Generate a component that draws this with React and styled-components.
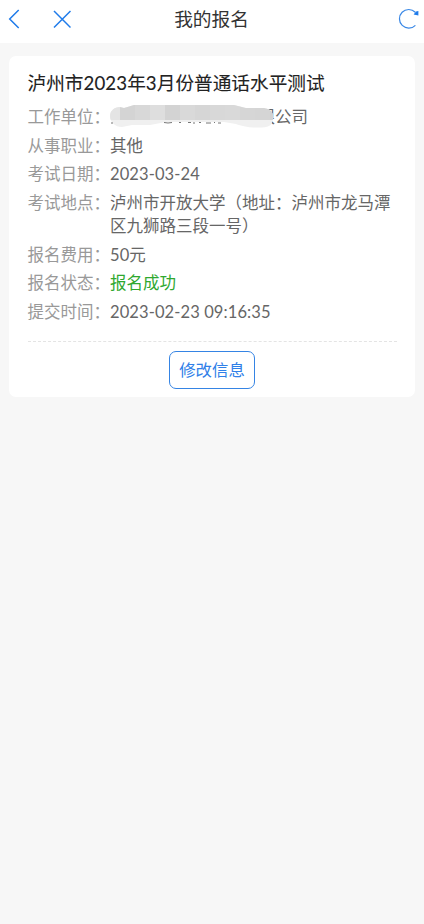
import styled, { createGlobalStyle } from 'styled-components';

const GlobalStyle = createGlobalStyle`
  * {
    box-sizing: border-box;
  }
  body {
    margin: 0;
    background-color: #f7f7f7;
    font-family: 'Noto Sans CJK SC', sans-serif;
  }
`;

const HeaderStyled = styled.header`
  display: grid;
  grid-template-columns: 1fr auto 1fr;
  align-items: center;
  height: 43px;
  padding: 0 4px 5px 6px;
  background-color: #ffffff;
`;

const HeaderTitleStyled = styled.h1`
  margin: 0 3px 2px 0;
  color: #333333;
  font-size: 18.7px;
  font-weight: 400;
  line-height: 28px;
`;

const HeaderActionsStyled = styled.div`
  display: flex;
  align-items: center;
  justify-content: ${(props) => (props.$end ? 'flex-end' : 'flex-start')};
  gap: 31px;
`;

const IconButtonStyled = styled.button`
  display: flex;
  padding: 0;
  border: 0;
  background: none;
`;

const CardStyled = styled.section`
  height: 341px;
  margin: 13px 9px 0;
  padding: 12px 18.5px 0;
  border-radius: 7px;
  background-color: #ffffff;
`;

const CardTitleStyled = styled.h2`
  margin: 0 0 9.3px;
  color: #222222;
  font-size: 18.67px;
  font-weight: 400;
  line-height: 28px;
  -webkit-text-stroke: 0.1px #222222;
`;

const InfoListStyled = styled.div`
  display: flex;
  flex-direction: column;
  gap: 5.6px;
  padding-bottom: 18.2px;
  border-bottom: 1px dashed #e4e4e4;
`;

const InfoItemStyled = styled.div`
  display: flex;
  font-size: 16.5px;
  line-height: 23px;
`;

const InfoLabelStyled = styled.div`
  flex: 0 0 82.5px;
  color: #999999;
`;

const InfoValueStyled = styled.div`
  flex: 1;
  margin-right: -6px;
  color: ${(props) => (props.$success ? '#2fa82f' : '#666666')};
`;

const NumberStyled = styled.span`
  font-family: Lato, sans-serif;
  line-height: 1;
  letter-spacing: 0.1px;
`;

const MaskedStyled = styled.span`
  position: relative;
  display: block;
  padding-left: 148.5px;
`;

const MaskStyled = styled.svg`
  position: absolute;
  top: 0;
  left: 0;
`;

const FooterStyled = styled.div`
  display: flex;
  justify-content: center;
  padding-top: 8.5px;
`;

const EditButtonStyled = styled.button`
  width: 86px;
  height: 38px;
  padding: 0 0 1px;
  border: 1.5px solid #3584e4;
  border-radius: 7px;
  background-color: #ffffff;
  color: #3080e8;
  font-family: inherit;
  font-size: 16.4px;
  line-height: 23px;
`;

export default function App() {
  return (
    <>
      <GlobalStyle />
      <HeaderStyled>
        <HeaderActionsStyled>
          <IconButtonStyled aria-label='返回'>
            <BackIcon />
          </IconButtonStyled>
          <IconButtonStyled aria-label='关闭'>
            <CloseIcon />
          </IconButtonStyled>
        </HeaderActionsStyled>
        <HeaderTitleStyled>我的报名</HeaderTitleStyled>
        <HeaderActionsStyled $end>
          <IconButtonStyled aria-label='刷新'>
            <RefreshIcon />
          </IconButtonStyled>
        </HeaderActionsStyled>
      </HeaderStyled>
      <CardStyled>
        <CardTitleStyled>
          泸州市<NumberStyled>2023</NumberStyled>年<NumberStyled>3</NumberStyled>月份普通话水平测试
        </CardTitleStyled>
        <InfoListStyled>
          <InfoItem label='工作单位：'>
            <MaskedStyled>
              限公司
              <Mask />
            </MaskedStyled>
          </InfoItem>
          <InfoItem label='从事职业：'>其他</InfoItem>
          <InfoItem label='考试日期：'>
            <NumberStyled>2023-03-24</NumberStyled>
          </InfoItem>
          <InfoItem label='考试地点：'>泸州市开放大学（地址：泸州市龙马潭区九狮路三段一号）</InfoItem>
          <InfoItem label='报名费用：'>
            <NumberStyled>50</NumberStyled>元
          </InfoItem>
          <InfoItem label='报名状态：' success>报名成功</InfoItem>
          <InfoItem label='提交时间：'>
            <NumberStyled>2023-02-23 09:16:35</NumberStyled>
          </InfoItem>
        </InfoListStyled>
        <FooterStyled>
          <EditButtonStyled>修改信息</EditButtonStyled>
        </FooterStyled>
      </CardStyled>
    </>
  );
}

const InfoItem = ({ label, success, children }) => {
  return (
    <InfoItemStyled>
      <InfoLabelStyled>{label}</InfoLabelStyled>
      <InfoValueStyled $success={success}>{children}</InfoValueStyled>
    </InfoItemStyled>
  );
};

const BackIcon = () => (
  <svg width='16' height='20' viewBox='0 0 16 20' fill='none' stroke='#1f7bea' strokeWidth='1.5'>
    <path d='M12.7 1L3.7 10L12.7 19' />
  </svg>
);

const CloseIcon = () => (
  <svg width='18' height='20' viewBox='0 0 18 20' fill='none' stroke='#1f7bea' strokeWidth='1.5'>
    <path d='M1 2L17.5 18.5M17.5 2L1 18.5' />
  </svg>
);

const RefreshIcon = () => (
  <svg width='22' height='22' viewBox='0 0 22 22' fill='none'>
    <path d='M17.3 4.2A9.3 9.3 0 1 0 17.4 17.3' stroke='#3a88e6' strokeWidth='1.2' />
    <path d='M20.4 3V7.6L15.6 6.6L18 3.6Z' fill='#1f7bea' />
  </svg>
);

const tiles = ['#d4d4d4', '#d8d8d8', '#dedede', '#d3d3d3', '#d9d9d9', '#d6d6d6', '#d8d8d8', '#d9d9d9', '#d6d6d6', '#d5d5d5', '#d2d2d2'];

// grey scribble that hides the company name
const Mask = () => (
  <MaskStyled width='166' height='26' viewBox='0 0 166 26'>
    <clipPath id='scribble'>
      <path d='M0 11C0 6 4 2 10 2L14 3L24 0H124L136 3H154C160 4 163 6 163 12C163 19 160 22.5 152 22.5C138 23 132 21 126 19L114 17H56L40 20H22L12 22C5 22 0 17 0 11Z' />
    </clipPath>
    <g clipPath='url(#scribble)'>
      <rect width='166' height='26' fill='#f0f0f0' />
      <rect width='10' height='15' fill='#e4e4e4' />
      {tiles.map((fill, index) => (
        <rect key={index} x={10 + index * 15} width='15' height='15' fill={fill} />
      ))}
    </g>
    <path d='M1 18h2M54 17.5q4 1 8 0M69 17.5h2M78 17.5h3M83 18h2M89 17.5h2M96 18h5M104 17.5h1M108 18h3' fill='none' stroke='#777777' strokeWidth='1' />
  </MaskStyled>
);
